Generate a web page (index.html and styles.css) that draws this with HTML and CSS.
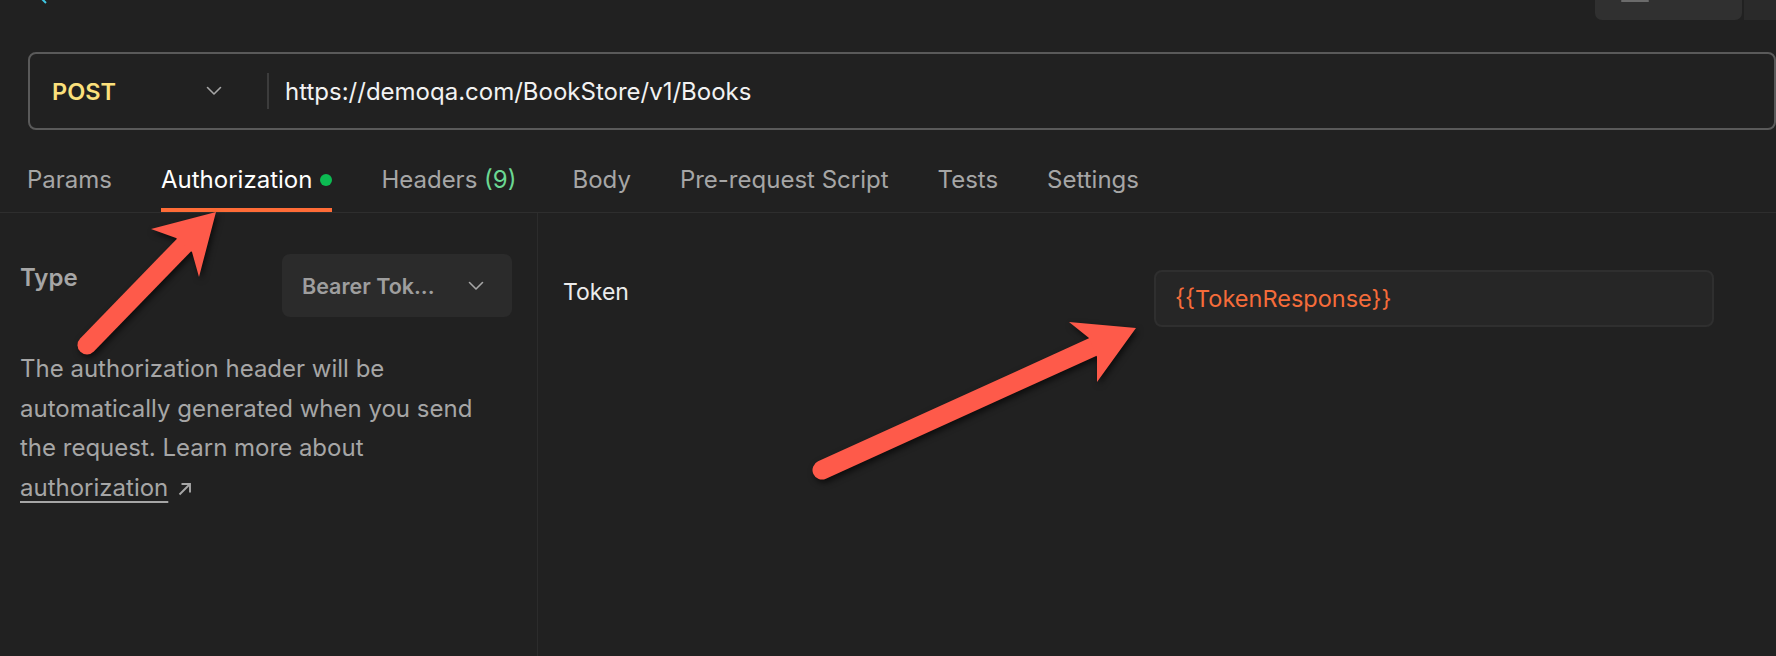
FILE: index.html
```html
<!DOCTYPE html>
<html lang="en">
<head>
<meta charset="utf-8">
<title>Authorization</title>
<link rel="stylesheet" href="styles.css">
</head>
<body>
<div class="app">
  <header class="topbar">
    <svg class="topbar-mark" width="10" height="6" viewBox="0 0 10 6"><line x1="1" y1="-1" x2="5" y2="3" stroke="#3fc8e4" stroke-width="2"/></svg>
    <div class="topbar-actions">
      <div class="tb-btn"><span class="tb-btn-bar"></span></div>
      <div class="tb-btn tb-btn-alt"></div>
    </div>
  </header>

  <div class="request-row">
    <div class="url-box">
      <div class="method">
        <span class="method-name">POST</span>
        <svg class="chev" width="16" height="10" viewBox="0 0 16 10"><path d="M1.5 1.5 L8 8 L14.5 1.5" fill="none" stroke="#a6a6a6" stroke-width="1.6" stroke-linecap="round" stroke-linejoin="round"/></svg>
      </div>
      <div class="url-divider"></div>
      <div class="url">https://demoqa.com/BookStore/v1/Books</div>
    </div>
  </div>

  <nav class="tabs">
    <span class="tab">Params</span>
    <span class="tab tab-active">Authorization<span class="dot"></span></span>
    <span class="tab">Headers <span class="count">(9)</span></span>
    <span class="tab tab-body">Body</span>
    <span class="tab">Pre-request Script</span>
    <span class="tab">Tests</span>
    <span class="tab">Settings</span>
  </nav>

  <main class="content">
    <section class="auth-left">
      <div class="type-row">
        <span class="type-label">Type</span>
        <div class="select">
          <span>Bearer Tok...</span>
          <svg class="chev" width="16" height="10" viewBox="0 0 16 10"><path d="M1.5 1.5 L8 8 L14.5 1.5" fill="none" stroke="#a6a6a6" stroke-width="1.6" stroke-linecap="round" stroke-linejoin="round"/></svg>
        </div>
      </div>
      <p class="auth-help">The authorization header will be automatically generated when you send the request. Learn more about <a class="help-link">authorization</a><svg class="ext" width="16" height="16" viewBox="0 0 16 16"><path d="M2.5 13.5 L12.5 3.5 M4.5 3 H13 V11.5" fill="none" stroke="#a6a6a6" stroke-width="1.9"/></svg></p>
    </section>
    <section class="auth-right">
      <div class="token-row">
        <span class="token-label">Token</span>
        <div class="token-input">{{TokenResponse}}</div>
      </div>
    </section>
  </main>

  <svg class="annotations" width="1776" height="656" viewBox="0 0 1776 656">
    <g class="arrow">
      <line x1="87" y1="345" x2="186" y2="243" stroke="#fe5a4a" stroke-width="19" stroke-linecap="round"/>
      <path d="M216 212 L151 229 L176 238 L192 252 L199 277 Z" fill="#fe5a4a"/>
    </g>
    <g class="arrow">
      <line x1="822" y1="470" x2="1095" y2="346" stroke="#fe5a4a" stroke-width="19" stroke-linecap="round"/>
      <path d="M1136 328 L1069 322 L1089 338 L1097 357 L1097 382 Z" fill="#fe5a4a"/>
    </g>
  </svg>
</div>
</body>
</html>
```

FILE: styles.css
```css
* { box-sizing: border-box; }

html, body {
  margin: 0;
  padding: 0;
  background: #212121;
  overflow: hidden;
}

body {
  font-family: "Inter", "Noto Sans", sans-serif;
  color: #e6e6e6;
}

.app {
  position: relative;
  width: 1776px;
  height: 656px;
  overflow: hidden;
}

/* top bar (clipped) */
.topbar {
  height: 20px;
  display: flex;
  justify-content: space-between;
  align-items: flex-end;
  overflow: hidden;
}

.topbar-mark {
  align-self: flex-start;
  margin-left: 41px;
}

.topbar-actions {
  display: flex;
  gap: 2px;
  margin-right: -8px;
  align-items: flex-end;
}

.tb-btn {
  width: 147px;
  height: 40px;
  background: #303030;
  border-radius: 7px;
  position: relative;
}

.tb-btn-bar {
  position: absolute;
  left: 26px;
  top: 20px;
  width: 28px;
  height: 2px;
  background: #6b6b6b;
  border-radius: 1px;
}

.tb-btn-alt {
  width: 40px;
  background: #2a2a2a;
  border-radius: 0;
}

/* request url */
.request-row {
  padding: 32px 0 0 28px;
}

.url-box {
  height: 78px;
  border: 2px solid #5a5a5a;
  border-radius: 8px;
  display: flex;
  align-items: center;
}

.method {
  width: 237px;
  display: flex;
  align-items: center;
  justify-content: space-between;
  padding: 0 45px 0 22px;
}

.method-name {
  font-size: 23.5px;
  font-weight: 600;
  color: #fbe07c;
}

.url-divider {
  width: 2px;
  height: 36px;
  background: #3c3c3c;
}

.url {
  padding-left: 16px;
  font-size: 24px;
  color: #f2f2f2;
}

/* tabs */
.tabs {
  display: flex;
  gap: 49px;
  padding: 34px 0 0 27px;
  border-bottom: 1px solid #2e2e2e;
}

.tab {
  display: flex;
  align-items: center;
  font-size: 24px;
  line-height: 32px;
  color: #a6a6a6;
  padding-bottom: 12px;
  border-bottom: 4px solid transparent;
  white-space: pre;
}

.tab-body {
  margin-left: 7px;
}

.tab-active {
  color: #ffffff;
  border-bottom-color: #ff6c37;
}

.dot {
  width: 12px;
  height: 12px;
  border-radius: 50%;
  background: #0cbb52;
  margin-left: 8px;
}

.count {
  color: #6bd893;
}

/* content */
.content {
  display: flex;
  height: 443px;
}

.auth-left {
  width: 538px;
  border-right: 1px solid #2c2c2c;
  padding: 41px 25px 0 20px;
}

.type-row {
  display: flex;
  justify-content: space-between;
  align-items: flex-start;
}

.type-label {
  margin-top: 8px;
  font-size: 24px;
  line-height: 32px;
  font-weight: 600;
  color: #a6a6a6;
}

.select {
  width: 230px;
  height: 63px;
  background: #2b2b2b;
  border-radius: 8px;
  display: flex;
  align-items: center;
  justify-content: space-between;
  padding: 0 28px 0 20px;
  font-size: 21.5px;
  font-weight: 600;
  color: #9e9e9e;
}

.auth-help {
  margin: 32px 0 0;
  font-size: 24px;
  line-height: 39.7px;
  color: #a6a6a6;
}

.help-link {
  color: #a6a6a6;
  text-decoration: underline;
  text-decoration-thickness: 2px;
  text-underline-offset: 5px;
}

.ext {
  vertical-align: -1px;
  margin-left: 9px;
}

.auth-right {
  flex: 1;
  padding: 57px 62px 0 25px;
}

.token-row {
  display: flex;
  align-items: flex-start;
  justify-content: space-between;
}

.token-label {
  margin-top: 6px;
  font-size: 23px;
  line-height: 32px;
  color: #ececec;
}

.token-input {
  width: 560px;
  height: 57px;
  background: #262626;
  border: 2px solid #2f2f2f;
  border-radius: 8px;
  padding-left: 19px;
  font-size: 23.5px;
  line-height: 53px;
  color: #f56c3a;
}

/* annotation overlay */
.annotations {
  position: absolute;
  left: 0;
  top: 0;
  pointer-events: none;
}

.arrow {
  filter: drop-shadow(2px 3px 3px rgba(0, 0, 0, 0.65));
}
```
